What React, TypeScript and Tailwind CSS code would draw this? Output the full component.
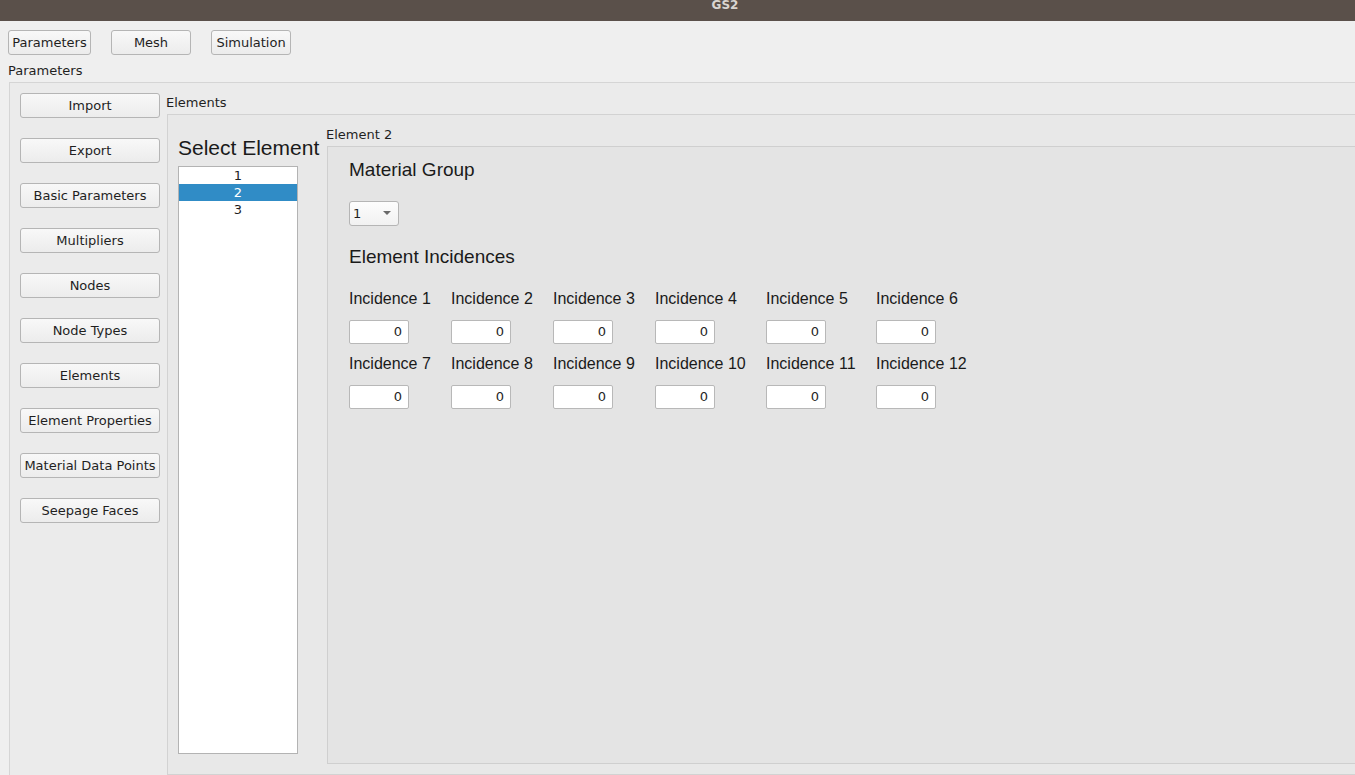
import { useState } from "react";

const SIDE_BUTTONS = [
  "Import",
  "Export",
  "Basic Parameters",
  "Multipliers",
  "Nodes",
  "Node Types",
  "Elements",
  "Element Properties",
  "Material Data Points",
  "Seepage Faces",
];

const INCIDENCES = Array.from({ length: 12 }, (_, i) => i + 1);

const ui = "font-['DejaVu_Sans',sans-serif] text-[13px] text-[#1f1f1f]";
const arial = "font-['Liberation_Sans',Arial,sans-serif] text-[#1a1a1a]";

function QtButton({ label, className = "" }: { label: string; className?: string }) {
  return (
    <button
      className={`h-[25px] rounded-[3px] border border-[#b5b5b5] bg-[linear-gradient(#f8f8f8,#ececec)] leading-none ${ui} ${className}`}
    >
      {label}
    </button>
  );
}

export default function App() {
  const [selected, setSelected] = useState(2);

  return (
    <div className="flex h-[775px] w-[1355px] flex-col overflow-hidden bg-[#efefef]">
      {/* title bar */}
      <div className="flex h-[21px] shrink-0 justify-center bg-[#5a504a]">
        <span className="-mt-[4px] pl-[95px] font-['DejaVu_Sans',sans-serif] text-[12px] font-bold text-[#d9d5d1]">
          GS2
        </span>
      </div>

      {/* tab buttons */}
      <div className="mt-[9px] flex gap-5 px-2">
        <QtButton label="Parameters" className="w-[83px]" />
        <QtButton label="Mesh" className="w-[80px]" />
        <QtButton label="Simulation" className="w-[80px]" />
      </div>

      <div className={`mt-[8px] h-[16px] pl-2 leading-[16px] ${ui}`}>Parameters</div>

      {/* Parameters group */}
      <div className="ml-[9px] mr-[-20px] mt-[3px] flex flex-1 gap-[6px] border border-[#d5d5d5] bg-[#ebebeb] pl-[10px] pt-[10px]">
        <div className="flex w-[140px] shrink-0 flex-col gap-5">
          {SIDE_BUTTONS.map((b) => (
            <QtButton key={b} label={b} className="w-[140px]" />
          ))}
        </div>

        <div className="flex flex-1 flex-col pt-[2px]">
          <div className={`h-[16px] leading-[16px] ${ui}`}>Elements</div>
          <div className="ml-px mt-[3px] flex h-[661px] border border-[#d2d2d2] bg-[#e8e8e8] pl-[10px]">
            {/* select element */}
            <div className="flex w-[120px] shrink-0 flex-col pt-[21px]">
              <div className={`h-[24px] whitespace-nowrap text-[21px] leading-[24px] ${arial}`}>
                Select Element
              </div>
              <div className="mt-[6px] h-[588px] border border-[#b3b3b3] bg-white">
                {[1, 2, 3].map((n) => (
                  <div
                    key={n}
                    onClick={() => setSelected(n)}
                    className={`h-[17px] text-center leading-[17px] ${ui} ${
                      selected === n ? "bg-[#308cc6] !text-white" : ""
                    }`}
                  >
                    {n}
                  </div>
                ))}
              </div>
            </div>

            {/* element detail */}
            <div className="ml-[28px] flex flex-1 flex-col pt-[12px]">
              <div className={`h-[16px] leading-[16px] ${ui}`}>Element {selected}</div>
              <div className="ml-px mt-[3px] flex h-[618px] flex-col border border-[#cfcfcf] bg-[#e4e4e4] pl-[21px] pt-[12px]">
                <div className={`h-[22px] text-[19px] leading-[22px] ${arial}`}>Material Group</div>

                <div className="mt-[20px] flex h-[25px] w-[50px] items-center justify-between rounded-[3px] border border-[#b5b5b5] bg-[linear-gradient(#fdfdfd,#f1f1f1)] pl-[3px] pr-[7px]">
                  <span className={ui}>1</span>
                  <svg width="8" height="5" viewBox="0 0 8 5">
                    <path d="M0 0 L8 0 L4 4 Z" fill="#6a6a6a" />
                  </svg>
                </div>

                <div className={`mt-[20px] h-[22px] text-[19px] leading-[22px] ${arial}`}>
                  Element Incidences
                </div>

                <div className="mt-[21px] grid grid-cols-[82px_82px_82px_91px_90px_90px] gap-x-5 gap-y-[10px]">
                  {INCIDENCES.map((n) => (
                    <div key={n} className="flex flex-col gap-[11px]">
                      <div className={`h-[20px] whitespace-nowrap text-[16px] leading-[20px] ${arial}`}>
                        Incidence {n}
                      </div>
                      <div
                        className={`flex h-[24px] w-[60px] items-center justify-end rounded-[2px] border border-[#b8b8b8] bg-white pr-[6px] ${ui}`}
                      >
                        0
                      </div>
                    </div>
                  ))}
                </div>
              </div>
            </div>
          </div>
        </div>
      </div>
    </div>
  );
}
